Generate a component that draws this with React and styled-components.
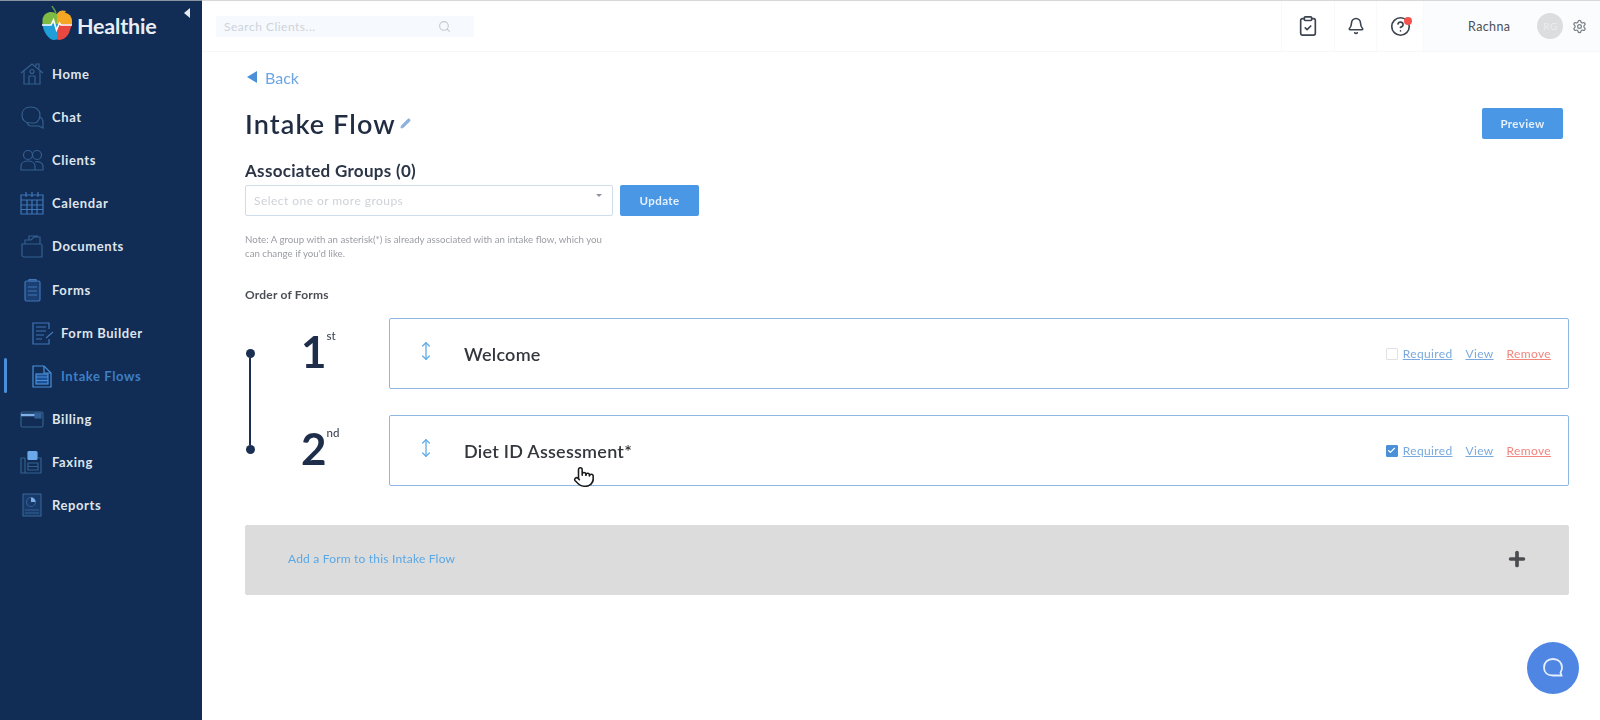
import styled, { createGlobalStyle } from 'styled-components';
import { Bell, CircleHelp, ClipboardCheck, MoveVertical, Plus, Pointer, Search, Settings, Pencil, Check } from 'lucide-react';

const GlobalStyle = createGlobalStyle`
  html, body {
    margin: 0;
    padding: 0;
    background: #fff;
    font-family: Lato, "Open Sans", Arial, sans-serif;
  }
  * { box-sizing: border-box; }
`;

const Page = styled.div`
  display: flex;
  width: 1600px;
  height: 720px;
  overflow: hidden;
  filter: blur(0.35px);
`;

const Sidebar = styled.nav`
  position: relative;
  flex: 0 0 202px;
  background: #112c55;
  border-top: 1px solid #8b93a0;
`;

const CollapseArrow = styled.span`
  position: absolute;
  top: 7px;
  left: 184px;
  border-style: solid;
  border-width: 5px 6px 5px 0;
  border-color: transparent #e6ebf2 transparent transparent;
`;

const Logo = styled.div`
  display: flex;
  align-items: center;
  height: 44px;
  padding: 0 0 0 41px;
  gap: 4px;
  margin-bottom: 7px;
`;

const LogoText = styled.span`
  color: #e9eef4;
  font-size: 21.5px;
  font-weight: 700;
  letter-spacing: -0.2px;
  margin-top: 5px;
`;

const NavList = styled.div`
  display: flex;
  flex-direction: column;
`;

const NavRow = styled.div`
  position: relative;
  display: flex;
  align-items: center;
  height: 43.2px;
  padding-left: ${(p) => (p.$sub ? '30px' : '20px')};
  gap: ${(p) => (p.$sub ? '7px' : '8px')};
  color: ${(p) => (p.$active ? '#3f7fc4' : '#dfe5ec')};
  font-size: 13px;
  font-weight: 700;
  letter-spacing: 0.6px;
  &::before {
    content: '';
    display: ${(p) => (p.$active ? 'block' : 'none')};
    position: absolute;
    left: 4px;
    top: 4px;
    width: 3px;
    height: 35px;
    border-radius: 2px;
    background: #4a90d9;
  }
`;

const NavGlyph = styled.svg`
  flex: 0 0 24px;
  width: 24px;
  height: 24px;
  fill: none;
  stroke: #34608f;
  stroke-width: 1.2;
`;

const Main = styled.main`
  flex: 1;
  display: flex;
  flex-direction: column;
  min-width: 0;
`;

const Header = styled.header`
  display: flex;
  align-items: stretch;
  justify-content: space-between;
  height: 52px;
  border-top: 1px solid #d8d8da;
  border-bottom: 1px solid #f6f7f9;
`;

const SearchBox = styled.div`
  display: flex;
  align-items: center;
  justify-content: space-between;
  width: 258px;
  height: 21px;
  margin: 15px 0 0 14px;
  padding: 0 23px 0 8px;
  background: #f6f9fe;
  color: #ced3da;
  font-size: 12px;
  letter-spacing: 0.5px;
`;

const HeaderRight = styled.div`
  display: flex;
  align-items: stretch;
`;

const HeaderIcon = styled.div`
  position: relative;
  display: flex;
  align-items: center;
  justify-content: center;
  width: ${(p) => p.$w}px;
  border-left: 1px solid #f8f9fa;
  color: #3c4450;
`;

const RedDot = styled.span`
  position: absolute;
  top: 16px;
  right: 11px;
  width: 8px;
  height: 8px;
  border-radius: 50%;
  background: #f4524d;
`;

const UserArea = styled.div`
  display: flex;
  align-items: center;
  width: 177px;
  padding-left: 44px;
  background: #fafcfe;
  border-left: 1px solid #f8f9fa;
  color: #4c5056;
  font-size: 12.5px;
  letter-spacing: 0.4px;
`;

const Avatar = styled.span`
  display: flex;
  align-items: center;
  justify-content: center;
  width: 26px;
  height: 26px;
  margin: 0 9px 0 27px;
  border-radius: 50%;
  background: #dcdddf;
  color: #eceded;
  font-size: 10px;
`;

const Content = styled.div`
  padding: 17px 31px 0 43px;
`;

const BackLink = styled.div`
  display: flex;
  align-items: center;
  gap: 8px;
  height: 16px;
  padding-left: 2px;
  color: #6ca6e2;
  font-size: 16px;
`;

const BackArrow = styled.span`
  border-style: solid;
  border-width: 6.5px 10px 6.5px 0;
  border-color: transparent #4a90d9 transparent transparent;
`;

const TitleRow = styled.div`
  display: flex;
  justify-content: space-between;
  align-items: center;
  margin-top: 22px;
  padding-right: 6px;
`;

const Title = styled.h1`
  display: flex;
  align-items: center;
  gap: 4px;
  margin: 0;
  color: #1f2c42;
  font-size: 27px;
  font-weight: 600;
  letter-spacing: 1.1px;
`;

const BlueButton = styled.button`
  height: 31px;
  width: ${(p) => p.$w}px;
  border: 0;
  border-radius: 2px;
  background: #4a97e6;
  color: #e4f0fc;
  font-family: inherit;
  font-size: 11.5px;
  font-weight: 700;
  letter-spacing: 0.4px;
`;

const GroupsLabel = styled.h2`
  margin: 21px 0 4px;
  color: #2b3546;
  font-size: 17px;
  font-weight: 700;
  line-height: 20px;
  letter-spacing: 0.3px;
`;

const GroupsRow = styled.div`
  display: flex;
  gap: 7px;
`;

const SelectBox = styled.div`
  position: relative;
  display: flex;
  align-items: center;
  width: 368px;
  height: 31px;
  padding-left: 8px;
  border: 1px solid #cfdcea;
  border-radius: 2px;
  color: #ced2d8;
  font-size: 12px;
  letter-spacing: 0.45px;
  &::after {
    content: '';
    position: absolute;
    top: 8px;
    right: 10px;
    border-style: solid;
    border-width: 3.5px 3.5px 0;
    border-color: #8f959d transparent transparent;
  }
`;

const Note = styled.p`
  width: 360px;
  margin: 16px 0 0;
  color: #9a9da3;
  font-size: 9.7px;
  line-height: 14px;
`;

const OrderLabel = styled.h3`
  margin: 27px 0 15px;
  color: #4a4e55;
  font-size: 12px;
  line-height: 16px;
  font-weight: 700;
  letter-spacing: 0.2px;
`;

const FormsGrid = styled.div`
  display: grid;
  grid-template-columns: 56px 1fr;
`;

const Rail = styled.div`
  display: flex;
  flex-direction: column;
  align-items: center;
  width: 10px;
  height: 105px;
  margin-top: 31px;
`;

const RailDot = styled.span`
  flex: 0 0 9px;
  width: 9px;
  border-radius: 50%;
  background: #1b2f53;
`;

const RailLine = styled.span`
  flex: 1;
  width: 2px;
  background: #1b2f53;
`;

const Rows = styled.div`
  display: flex;
  flex-direction: column;
  gap: 26px;
`;

const FormRow = styled.div`
  display: flex;
`;

const Ordinal = styled.div`
  display: flex;
  align-items: flex-start;
  flex: 0 0 88px;
  padding-top: 7px;
  color: #1d2d4a;
  font-size: 44px;
  line-height: 52px;
  font-weight: 700;
`;

const OrdinalSuffix = styled.span`
  margin: 4px 0 0 ${(p) => p.$gap}px;
  color: #41495a;
  font-size: 11.5px;
  line-height: 14px;
  font-weight: 500;
`;

const FormCard = styled.div`
  position: relative;
  flex: 1;
  display: flex;
  align-items: center;
  height: 71px;
  padding: 0 17px 0 26px;
  border: 1.5px solid #8eb8e2;
  border-radius: 2px;
`;

const DragHandle = styled.span`
  display: flex;
  width: 48px;
  margin-top: -5px;
  color: #62ade8;
`;

const FormName = styled.span`
  flex: 1;
  color: #33373d;
  font-size: 18px;
  font-weight: 600;
  letter-spacing: 0.25px;
`;

const CardActions = styled.div`
  display: flex;
  align-items: center;
  font-size: 12px;
  letter-spacing: 0.35px;
`;

const CheckBox = styled.span`
  display: flex;
  align-items: center;
  justify-content: center;
  width: 12px;
  height: 12px;
  margin-right: 5px;
  border-radius: 1px;
  border: 1px solid ${(p) => (p.$checked ? '#4a90d9' : '#dfe1e4')};
  background: ${(p) => (p.$checked ? '#4a90d9' : '#fff')};
  color: #fff;
`;

const ActionLink = styled.a`
  margin-left: ${(p) => p.$gap || 0}px;
  color: ${(p) => (p.$danger ? '#f0867e' : '#7aa9dd')};
  text-decoration: underline;
`;

const HandCursor = styled.span`
  position: absolute;
  left: 183px;
  top: 50px;
  display: flex;
  color: #1c1c1c;
`;

const AddForm = styled.div`
  display: flex;
  align-items: center;
  justify-content: space-between;
  height: 70px;
  margin-top: 39px;
  padding: 0 41px 3px 43px;
  border-radius: 2px;
  background: #dcdcdc;
  color: #5aa8e6;
  font-size: 12px;
  letter-spacing: 0.2px;
`;

const PlusIcon = styled.span`
  display: flex;
  color: #4a4c50;
`;

const ChatFab = styled.div`
  position: fixed;
  left: 1527px;
  top: 642px;
  display: flex;
  align-items: center;
  justify-content: center;
  width: 52px;
  height: 52px;
  border-radius: 50%;
  background: #4f86e3;
`;

const AppleLogo = () => (
  <svg width="32" height="36" viewBox="0 0 32 36">
    <path d="M15 8C14 5 12 3 11 1" fill="none" stroke="#5a9a48" strokeWidth="1.6" />
    <path d="M16 9C18 5 22 5 25 6C24 9 20 10 16 9Z" fill="#f2a62e" />
    <path d="M16 9C11 5 3 7 1.5 14L1.5 19H16Z" fill="#7fbb42" />
    <path d="M16 9C21 6 30 7 31 15L31 19H16Z" fill="#f5a623" />
    <path d="M1.5 19C2 27 8 35 13 35L16 34.5V19Z" fill="#1f9ed9" />
    <path d="M16 19V34.5C19 36 25 34 28 28L31 19Z" fill="#e8483f" />
    <path d="M1 20H10L12.5 15L15.5 25L18.5 18L20 20H31" fill="none" stroke="#fff" strokeWidth="1.6" />
  </svg>
);

const HomeIcon = () => (
  <NavGlyph viewBox="0 0 24 24">
    <path d="M1 11L12 2L23 11M4 9V22H20V9M9 22V14H15V22M16 4V2H19V6.5" />
    <circle cx="12" cy="9.5" r="2" />
  </NavGlyph>
);
const ChatIcon = () => (
  <NavGlyph viewBox="0 0 24 24">
    <path d="M11 2C5 2 2 5.500 2 10C2 15 5 18 11 18H15L17 17C19 15 20 13 20 10C20 5 16 2 11 2Z" />
    <path d="M20 12C22 13 23 15 23 17V23L19 21H11C9 21 8 20 7 18" />
  </NavGlyph>
);
const ClientsIcon = () => (
  <NavGlyph viewBox="0 0 24 24">
    <circle cx="8" cy="7" r="4.500" />
    <circle cx="17" cy="7" r="4.500" />
    <path d="M1 22V18C1 15 4 13 8 13C12 13 15 15 15 18V22ZM15 14C19 13 23 15 23 18V22H15" />
  </NavGlyph>
);
const CalendarIcon = () => (
  <NavGlyph viewBox="0 0 24 24" style={{ stroke: '#3f77b8' }}>
    <path d="M1 4H23V23H1ZM1 9H23M6 1V6M12 1V6M18 1V6M7 9V23M12 9V23M17 9V23M1 14H23M1 18.500H23" />
  </NavGlyph>
);
const DocumentsIcon = () => (
  <NavGlyph viewBox="0 0 24 24">
    <path d="M2 10H21C22 10 22 11 22 12V23H4C3 23 2 22 2 21ZM5 10V6L11 6L14 3H20V10M9 6V2H18" />
  </NavGlyph>
);
const FormsIcon = () => (
  <NavGlyph viewBox="0 0 24 24" style={{ stroke: '#3f77b8' }}>
    <rect x="5" y="3" width="15" height="20" rx="1.500" fill="#1b3f72" />
    <path d="M9 3H16V1.500H9ZM8 9H17M8 13H17M8 17H17" />
  </NavGlyph>
);
const BuilderIcon = () => (
  <NavGlyph viewBox="0 0 24 24" style={{ stroke: '#3f77b8' }}>
    <path d="M19 8V2H3V23H19V18M6 6H16M6 10H16M6 14H14M6 18H12M16 17L23 11" />
  </NavGlyph>
);
const FlowsIcon = () => (
  <NavGlyph viewBox="0 0 24 24" style={{ stroke: '#4a90d9' }}>
    <path d="M3 2H14L21 9V23H3Z" />
    <rect x="6" y="10" width="12" height="10" fill="#1c4f94" />
    <path d="M6 13H18M6 16.500H18M14 2V9H21" />
  </NavGlyph>
);
const BillingIcon = () => (
  <NavGlyph viewBox="0 0 24 24">
    <rect x="1" y="5" width="22" height="15" rx="1.500" />
    <path d="M1 8H15" stroke="#7fb0e8" strokeWidth="2.500" />
    <rect x="15" y="6" width="6" height="5" fill="#2f5f9c" />
  </NavGlyph>
);
const FaxIcon = () => (
  <NavGlyph viewBox="0 0 24 24">
    <path d="M5 8H1V23H21V8H18" />
    <path d="M5 8V23" />
    <rect x="8" y="1.500" width="9" height="8" rx="1" fill="#6ba8ea" stroke="#6ba8ea" />
    <path d="M8 13H18V20H8ZM8 16.500H18" />
  </NavGlyph>
);
const ReportsIcon = () => (
  <NavGlyph viewBox="0 0 24 24">
    <rect x="3" y="1" width="18" height="22" fill="#173a6b" />
    <circle cx="11" cy="9" r="4.500" />
    <path d="M11 9V4.500A4.500 4.500 0 0 1 15.500 9Z" fill="#7fb0e8" stroke="none" />
    <path d="M5 17H19M5 20H19" />
  </NavGlyph>
);

const navItems = [
  { label: 'Home', icon: HomeIcon },
  { label: 'Chat', icon: ChatIcon },
  { label: 'Clients', icon: ClientsIcon },
  { label: 'Calendar', icon: CalendarIcon },
  { label: 'Documents', icon: DocumentsIcon },
  { label: 'Forms', icon: FormsIcon },
  { label: 'Form Builder', icon: BuilderIcon, sub: true },
  { label: 'Intake Flows', icon: FlowsIcon, sub: true, active: true },
  { label: 'Billing', icon: BillingIcon },
  { label: 'Faxing', icon: FaxIcon },
  { label: 'Reports', icon: ReportsIcon },
];

const forms = [
  { id: 1, num: '1', suffix: 'st', gap: 0, name: 'Welcome', required: false },
  { id: 2, num: '2', suffix: 'nd', gap: 0, name: 'Diet ID Assessment*', required: true },
];

export default function App() {
  return (
    <>
      <GlobalStyle />
      <Page>
        <Sidebar>
          <CollapseArrow />
          <Logo>
            <AppleLogo />
            <LogoText>Healthie</LogoText>
          </Logo>
          <NavList>
            {navItems.map(({ label, icon: Icon, sub, active }) => (
              <NavRow key={label} $sub={sub} $active={active}>
                <Icon />
                {label}
              </NavRow>
            ))}
          </NavList>
        </Sidebar>
        <Main>
          <Header>
            <SearchBox>
              Search Clients...
              <Search size={13} color="#c5c9cf" />
            </SearchBox>
            <HeaderRight>
              <HeaderIcon $w={53}>
                <ClipboardCheck size={22} strokeWidth={1.8} />
              </HeaderIcon>
              <HeaderIcon $w={42}>
                <Bell size={18} strokeWidth={2.1} />
              </HeaderIcon>
              <HeaderIcon $w={47}>
                <CircleHelp size={21} strokeWidth={1.9} />
                <RedDot />
              </HeaderIcon>
              <UserArea>
                Rachna
                <Avatar>RG</Avatar>
                <Settings size={15} color="#7b8088" />
              </UserArea>
            </HeaderRight>
          </Header>
          <Content>
            <BackLink>
              <BackArrow />
              Back
            </BackLink>
            <TitleRow>
              <Title>
                Intake Flow
                <Pencil size={11} color="#8fb0e0" fill="#8fb0e0" />
              </Title>
              <BlueButton $w={81}>Preview</BlueButton>
            </TitleRow>
            <GroupsLabel>Associated Groups (0)</GroupsLabel>
            <GroupsRow>
              <SelectBox>Select one or more groups</SelectBox>
              <BlueButton $w={79}>Update</BlueButton>
            </GroupsRow>
            <Note>
              Note: A group with an asterisk(*) is already associated with an intake flow, which you
              can change if you'd like.
            </Note>
            <OrderLabel>Order of Forms</OrderLabel>
            <FormsGrid>
              <Rail>
                <RailDot />
                <RailLine />
                <RailDot />
              </Rail>
              <Rows>
                {forms.map((form) => (
                  <FormRow key={form.id}>
                    <Ordinal>
                      {form.num}
                      <OrdinalSuffix $gap={form.gap}>{form.suffix}</OrdinalSuffix>
                    </Ordinal>
                    <FormCard>
                      <DragHandle>
                        <MoveVertical size={20} strokeWidth={1.6} />
                      </DragHandle>
                      <FormName>{form.name}</FormName>
                      <CardActions>
                        <CheckBox $checked={form.required}>
                          {form.required && <Check size={9} strokeWidth={3} />}
                        </CheckBox>
                        <ActionLink>Required</ActionLink>
                        <ActionLink $gap={13}>View</ActionLink>
                        <ActionLink $gap={13} $danger>Remove</ActionLink>
                      </CardActions>
                      {form.required && (
                        <HandCursor>
                          <Pointer size={22} fill="#fff" strokeWidth={1.7} />
                        </HandCursor>
                      )}
                    </FormCard>
                  </FormRow>
                ))}
              </Rows>
            </FormsGrid>
            <AddForm>
              Add a Form to this Intake Flow
              <PlusIcon>
                <Plus size={22} strokeWidth={4} />
              </PlusIcon>
            </AddForm>
          </Content>
        </Main>
        <ChatFab>
          <svg width="24" height="24" viewBox="0 0 24 24" fill="none" stroke="#e6effc" strokeWidth="1.800">
            <path d="M12 3C6.500 3 3 6.500 3 11.500C3 16.500 6.500 19.500 12 19.500H20.500L19.500 16.500C20.500 15 21 13.500 21 11.500C21 6.500 17.500 3 12 3Z" />
          </svg>
        </ChatFab>
      </Page>
    </>
  );
}
